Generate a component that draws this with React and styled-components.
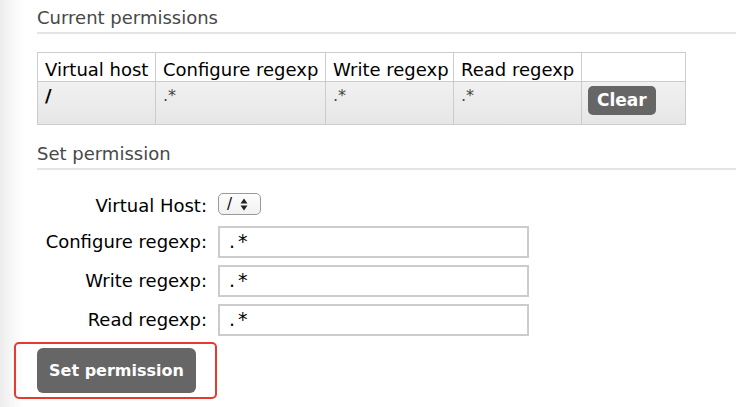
import React from "react";
import styled, { createGlobalStyle } from "styled-components";

const Global = createGlobalStyle`
  html, body { margin: 0; padding: 0; }
  body {
    background: linear-gradient(to right, #ececec 0px, #f7f7f7 12px, #ffffff 24px);
    font-family: "DejaVu Sans", Verdana, sans-serif;
    color: #000;
    min-height: 407px;
  }
`;

const Page = styled.div`
  padding-left: 37px;
  overflow: hidden;
  height: 407px;
`;

const Heading = styled.h2`
  margin: ${(p) => p.$top}px 0 0 0;
  padding: 6px 0 2px 0;
  font-size: 18px;
  font-weight: normal;
  line-height: 24px;
  color: #484848;
  border-bottom: 2px solid #e4e4e4;
`;

const PermTable = styled.table`
  margin-top: 18px;
  border-collapse: collapse;
  table-layout: fixed;
  width: 649px;
  font-size: 18px;
`;

const Col = styled.col`
  width: ${(p) => p.$w}px;
`;

const Th = styled.th`
  border: 1px solid #cccccc;
  font-weight: normal;
  text-align: left;
  padding: 5px 0 0 7px;
  line-height: 23px;
  background: #fff;
  white-space: nowrap;
  overflow: hidden;
`;

const BodyRow = styled.tr`
  background: linear-gradient(to bottom, #f1f1f1, #e6e6e6);
`;

const Td = styled.td`
  border: 1px solid #cccccc;
  padding: ${(p) => (p.$btn ? "4px 0 9px 6px" : "3px 0 0 7px")};
  height: 43px;
  box-sizing: border-box;
  vertical-align: top;
  font-size: ${(p) => (p.$bold ? "18px" : "16px")};
  font-weight: ${(p) => (p.$bold ? "bold" : "normal")};
  color: ${(p) => (p.$bold ? "#000" : "#444")};
  line-height: 22px;
`;

const SmallButton = styled.button`
  font-family: "DejaVu Sans", Verdana, sans-serif;
  font-weight: bold;
  font-size: 17px;
  color: #fff;
  background: #666666;
  border: none;
  border-radius: 5px;
  height: 29px;
  padding: 0 9px;
  line-height: 29px;
`;

const Form = styled.div`
  margin-top: 23px;
  display: grid;
  grid-template-columns: 170px auto;
  column-gap: 11px;
  row-gap: 7px;
  align-items: center;
  justify-items: start;
`;

const Label = styled.label`
  justify-self: end;
  font-size: 18px;
  line-height: 24px;
  color: #000;
`;

const Select = styled.div`
  display: flex;
  align-items: center;
  gap: 8px;
  height: 20px;
  width: 33px;
  border: 1px solid #9a9a9a;
  border-radius: 5px;
  background: linear-gradient(to bottom, #fdfdfd, #f1f1f1);
  padding: 0 0 0 8px;
  font-size: 15px;
  margin-bottom: 4px;
`;

const Input = styled.div`
  width: 311px;
  height: 32px;
  box-sizing: border-box;
  border: 2px solid #cccccc;
  background: #fff;
  padding: 0 0 0 9px;
  font-size: 19px;
  letter-spacing: 3px;
  line-height: 26px;
`;

const HighlightBox = styled.div`
  margin: 6px 0 0 -23px;
  width: 203px;
  height: 57px;
  box-sizing: border-box;
  border: 2px solid #e8392e;
  border-radius: 5px;
  padding: 4px 0 0 21px;
`;

const BigButton = styled.button`
  font-family: "DejaVu Sans", Verdana, sans-serif;
  font-weight: bold;
  font-size: 16px;
  color: #fff;
  background: #666666;
  border: none;
  border-radius: 6px;
  width: 159px;
  height: 45px;
  padding: 0;
`;

const Arrows = () => (
  <svg width="8" height="13" viewBox="0 0 8 13">
    <path d="M4 0.5 L7.5 5.5 L0.5 5.5 Z" fill="#222" />
    <path d="M4 12.5 L7.5 7.5 L0.5 7.5 Z" fill="#222" />
  </svg>
);

export default function App() {
  return (
    <>
      <Global />
      <Page>
        <Heading $top={0}>Current permissions</Heading>
        <PermTable>
          <colgroup>
            <Col $w={118} />
            <Col $w={170} />
            <Col $w={128} />
            <Col $w={128} />
            <Col $w={104} />
          </colgroup>
          <thead>
            <tr>
              <Th>Virtual host</Th>
              <Th>Configure regexp</Th>
              <Th>Write regexp</Th>
              <Th>Read regexp</Th>
              <Th></Th>
            </tr>
          </thead>
          <tbody>
            <BodyRow>
              <Td $bold>/</Td>
              <Td>.*</Td>
              <Td>.*</Td>
              <Td>.*</Td>
              <Td $btn>
                <SmallButton>Clear</SmallButton>
              </Td>
            </BodyRow>
          </tbody>
        </PermTable>
        <Heading $top={11}>Set permission</Heading>
        <Form>
          <Label>Virtual Host:</Label>
          <Select>
            <span>/</span>
            <Arrows />
          </Select>
          <Label>Configure regexp:</Label>
          <Input>.*</Input>
          <Label>Write regexp:</Label>
          <Input>.*</Input>
          <Label>Read regexp:</Label>
          <Input>.*</Input>
        </Form>
        <HighlightBox>
          <BigButton>Set permission</BigButton>
        </HighlightBox>
      </Page>
    </>
  );
}
